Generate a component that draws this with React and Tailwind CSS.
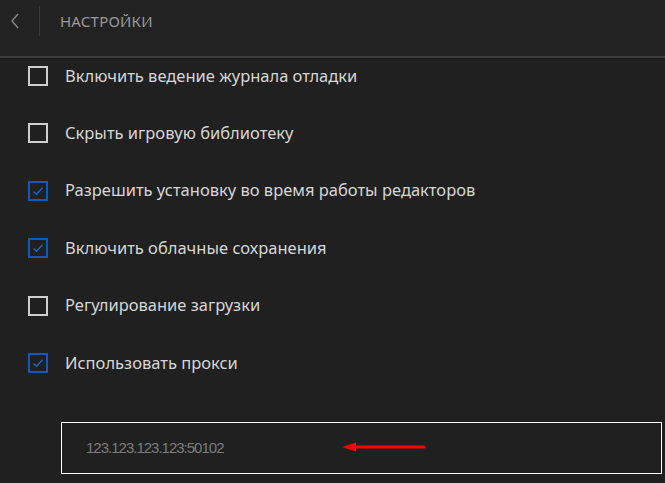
import React from 'react'

const options = [
  { label: 'Включить ведение журнала отладки', checked: false },
  { label: 'Скрыть игровую библиотеку', checked: false },
  { label: 'Разрешить установку во время работы редакторов', checked: true },
  { label: 'Включить облачные сохранения', checked: true },
  { label: 'Регулирование загрузки', checked: false },
  { label: 'Использовать прокси', checked: true },
]

const Checkbox = ({ checked }) =>
  checked ? (
    <div className="w-[20px] h-[20px] shrink-0 border-2 border-[#0f5bbd] flex items-center justify-center">
      <svg width="12" height="10" viewBox="0 0 12 10" fill="none">
        <path d="M1.5 5.5 L4.5 8.2 L10.5 1.8" stroke="#1a66c9" strokeWidth="1.4" />
      </svg>
    </div>
  ) : (
    <div className="w-[20px] h-[20px] shrink-0 border-2 border-[#cfcfcf]" />
  )

const App = () => {
  return (
    <div className="w-[665px] h-[483px] overflow-hidden bg-[#202020] font-['Noto_Sans',sans-serif]">
      {/* Header */}
      <div className="h-[56px] bg-[#222222] flex items-center">
        <div className="w-[39px] h-full flex items-center justify-center pr-[10px] pb-[14px]">
          <svg width="10" height="16" viewBox="0 0 10 16" fill="none">
            <path d="M8 1 L2 8 L8 15" stroke="#8a8a8a" strokeWidth="1.3" />
          </svg>
        </div>
        <div className="w-px h-[30px] bg-[#3a3a3a] mb-[14px]" />
        <div className="ml-[20px] mb-[14px] text-[15px] text-[#9a9a9a] tracking-[0.2px]">НАСТРОЙКИ</div>
      </div>
      <div className="h-[2px] bg-[#3c3c3c]" />
      <div className="h-[3px] bg-gradient-to-b from-[#1a1a1a] to-[#202020]" />

      {/* Options */}
      <div className="flex flex-col gap-[37.4px] pl-[28px] pt-[5px]">
        {options.map((o) => (
          <div key={o.label} className="h-[20px] flex items-center gap-[17px]">
            <Checkbox checked={o.checked} />
            <span className="text-[16.5px] text-[#d6d6d6] whitespace-nowrap">{o.label}</span>
          </div>
        ))}
      </div>

      {/* Proxy input */}
      <div className="ml-[61px] mt-[49px] w-[601px] h-[52px] border border-white flex items-center pl-[24px] relative">
        <span className="text-[15px] tracking-[-1px] text-[#7c7c7c] font-['Liberation_Sans',sans-serif]">123.123.123.123:50102</span>
        <svg className="absolute left-[280px] top-[18px]" width="84" height="12" viewBox="0 0 84 12">
          <path d="M0 6 L14 1.5 L14 10.5 Z" fill="#ff0000" />
          <line x1="12" y1="6" x2="82" y2="6" stroke="#ff0000" strokeWidth="3" strokeLinecap="round" />
        </svg>
      </div>
    </div>
  )
}

export default App
